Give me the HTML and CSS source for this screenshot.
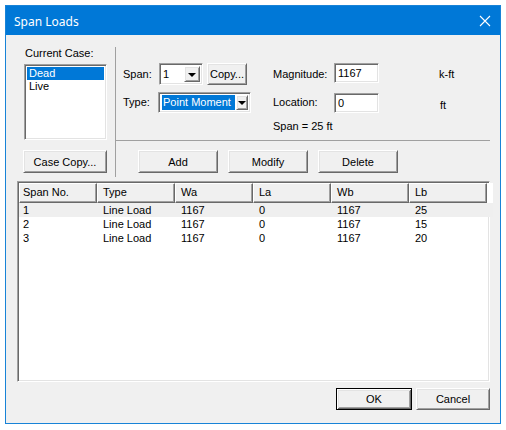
FILE: index.html
```html
<!DOCTYPE html>
<html>
<head>
<meta charset="utf-8">
<link rel="stylesheet" href="styles.css">
</head>
<body>
<div class="window">
  <div class="titlebar">
    <span class="title">Span Loads</span>
    <svg class="close" width="12" height="12" viewBox="0 0 12 12"><path d="M1 1 L11 11 M11 1 L1 11" stroke="#fff" stroke-width="1.1" fill="none"/></svg>
  </div>
  <div class="client">
    <div class="top">
      <div class="leftcol">
        <div class="label cc">Current Case:</div>
        <div class="listbox sunken">
          <div class="lbitem sel">Dead</div>
          <div class="lbitem">Live</div>
        </div>
        <div class="btn casecopy">Case Copy...</div>
      </div>
      <div class="vsep"></div>
      <div class="right">
        <div class="row r1">
          <div class="label lspan">Span:</div>
          <div class="combo sunken cspan"><span class="ctext">1</span><span class="arrowbtn"><i></i></span></div>
          <div class="btn copy">Copy...</div>
          <div class="label lmag">Magnitude:</div>
          <div class="input sunken"><span>1167</span></div>
          <div class="label unit1">k-ft</div>
        </div>
        <div class="row r2">
          <div class="label ltype">Type:</div>
          <div class="combo sunken ctype"><span class="ctext seltext">Point Moment</span><span class="arrowbtn"><i></i></span></div>
          <div class="label lloc">Location:</div>
          <div class="input sunken inloc"><span>0</span></div>
          <div class="label unit2">ft</div>
        </div>
        <div class="row r3">
          <div class="label spaninfo">Span = 25 ft</div>
        </div>
        <div class="hsep"></div>
        <div class="row btnrow">
          <div class="btn act">Add</div>
          <div class="btn act">Modify</div>
          <div class="btn act">Delete</div>
        </div>
      </div>
    </div>
    <div class="listview sunken">
      <div class="lvgrid">
        <div class="hdr first">Span No.</div>
        <div class="hdr">Type</div>
        <div class="hdr">Wa</div>
        <div class="hdr">La</div>
        <div class="hdr">Wb</div>
        <div class="hdr">Lb</div>
        <div class="hdrfill"></div>

        <div class="cell first hl">1</div>
        <div class="cell hl">Line Load</div>
        <div class="cell hl">1167</div>
        <div class="cell hl">0</div>
        <div class="cell hl">1167</div>
        <div class="cell hl">25</div>
        <div class="cell hl fill"></div>

        <div class="cell first">2</div>
        <div class="cell">Line Load</div>
        <div class="cell">1167</div>
        <div class="cell">0</div>
        <div class="cell">1167</div>
        <div class="cell">15</div>
        <div class="cell fill"></div>

        <div class="cell first">3</div>
        <div class="cell">Line Load</div>
        <div class="cell">1167</div>
        <div class="cell">0</div>
        <div class="cell">1167</div>
        <div class="cell">20</div>
        <div class="cell fill"></div>
      </div>
    </div>
    <div class="bottom">
      <div class="btn ok">OK</div>
      <div class="btn cancel">Cancel</div>
    </div>
  </div>
</div>
</body>
</html>
```

FILE: styles.css
```css
* { box-sizing: border-box; }
html, body { margin: 0; padding: 0; background: #ffffff; }
body {
  font-family: "Liberation Sans", Arial, sans-serif;
  font-size: 11px;
  color: #000;
}
.window {
  margin: 5px 0 0 5px;
  width: 496px;
  height: 419px;
  border: 1px solid #1883d7;
  display: flex;
  flex-direction: column;
}
.titlebar {
  height: 29px;
  background: #0078d7;
  display: flex;
  align-items: center;
  padding-left: 8px;
  padding-right: 9px;
  flex-shrink: 0;
}
.title {
  font-family: "Noto Sans", "Open Sans", sans-serif;
  font-size: 12px;
  color: #fff;
  flex: 1;
  margin-top: 1px;
}
.close { display: block; margin-top: 1px; }
.client {
  height: 388px;
  background: #f0f0f0;
  padding: 0 10px 0 11px;
  display: flex;
  flex-direction: column;
}
.label { line-height: 13px; white-space: nowrap; }
.sunken {
  background: #fff;
  border: 1px solid;
  border-color: #a0a0a0 #ffffff #ffffff #a0a0a0;
  box-shadow: inset 1px 1px #696969, inset -1px -1px #e3e3e3;
}
.btn {
  background: #f0f0f0;
  border: 1px solid;
  border-color: #ffffff #696969 #696969 #ffffff;
  box-shadow: inset 1px 1px #e3e3e3, inset -1px -1px #a0a0a0;
  display: flex;
  align-items: center;
  justify-content: center;
  white-space: nowrap;
}
.top {
  height: 146px;
  display: flex;
  flex-shrink: 0;
}
.leftcol {
  margin-left: 7px;
  width: 83px;
  padding-top: 12px;
  display: flex;
  flex-direction: column;
}
.cc { padding-left: 1px; height: 13px; margin-bottom: 4px; }
.listbox {
  height: 76px;
  padding: 2px;
}
.lbitem { line-height: 13px; height: 13px; padding-left: 2px; }
.lbitem.sel { background: #0078d7; color: #fff; }
.casecopy { margin-top: 10px; height: 23px; margin-left: -1px; width: 84px; }
.vsep {
  margin-left: 8px;
  margin-top: 12px;
  width: 1px;
  height: 130px;
  background: #a0a0a0;
}
.right {
  flex: 1;
  padding-top: 28px;
  display: flex;
  flex-direction: column;
}
.row { display: flex; align-items: flex-start; }
.r1 { height: 22px; }
.r1 .label { margin-top: 5px; }
.lspan { margin-left: 7px; width: 36px; }
.combo {
  display: flex;
  padding: 2px;
  align-items: stretch;
}
.cspan { width: 44px; height: 22px; }
.ctext { flex: 1; line-height: 16px; padding-left: 1px; }
.arrowbtn {
  width: 16px;
  background: #f0f0f0;
  border: 1px solid;
  border-color: #ffffff #696969 #696969 #ffffff;
  box-shadow: inset 1px 1px #e3e3e3, inset -1px -1px #a0a0a0;
  display: flex;
  align-items: center;
  justify-content: center;
}
.arrowbtn i {
  width: 0; height: 0;
  border-left: 4px solid transparent;
  border-right: 4px solid transparent;
  border-top: 4px solid #000;
  margin-top: 1px;
}
.copy { margin-left: 4px; width: 40px; height: 22px; }
.lmag { margin-left: 26px; width: 61px; }
.input { width: 45px; height: 20px; padding: 2px 3px; line-height: 15px; }
.unit1 { margin-left: 60px; }
.r2 { margin-top: 7px; height: 21px; }
.r2 .label { margin-top: 4px; }
.ltype { margin-left: 7px; width: 35px; }
.ctype { width: 93px; height: 21px; }
.seltext { background: #0078d7; color: #fff; margin: 0 1px 0 1px; line-height: 15px; flex: none; width: 73px; padding-left: 1px; }
.ctype .arrowbtn { margin-left: auto; }
.lloc { margin-left: 22px; width: 61px; }
.inloc { margin-top: 1px; }
.r2 .unit2 { margin-left: 61px; margin-top: 7px; }
.r3 { margin-top: 7px; height: 13px; }
.spaninfo { margin-left: 157px; }
.hsep {
  margin-top: 7px;
  height: 1px;
  background: #a0a0a0;
}
.btnrow { margin-top: 9px; gap: 10px; padding-left: 22px; }
.act { width: 80px; height: 23px; }
.listview {
  height: 201px;
  padding: 1px;
  flex-shrink: 0;
}
.lvgrid {
  display: grid;
  grid-template-columns: repeat(6, 78px) 1fr;
  grid-template-rows: 20px;
  grid-auto-rows: 14px;
}
.hdr {
  background: #f0f0f0;
  border: 1px solid;
  border-color: #ffffff #696969 #696969 #ffffff;
  box-shadow: inset -1px -1px #a0a0a0;
  padding-left: 5px;
  line-height: 17px;
  white-space: nowrap;
}
.hdr.first { padding-left: 3px; }
.hdrfill { background: #fff; }
.cell { padding-left: 6px; line-height: 14px; white-space: nowrap; }
.cell.first { padding-left: 4px; }
.cell.hl { background: #efefef; }
.bottom {
  margin-top: 6px;
  display: flex;
  justify-content: flex-end;
  gap: 4px;
}
.ok {
  width: 76px; height: 22px;
  border: 1px solid #000;
  box-shadow: inset 1px 1px #fff, inset -1px -1px #696969, inset 2px 2px #e3e3e3, inset -2px -2px #a0a0a0;
}
.cancel { width: 74px; height: 22px; }
```
